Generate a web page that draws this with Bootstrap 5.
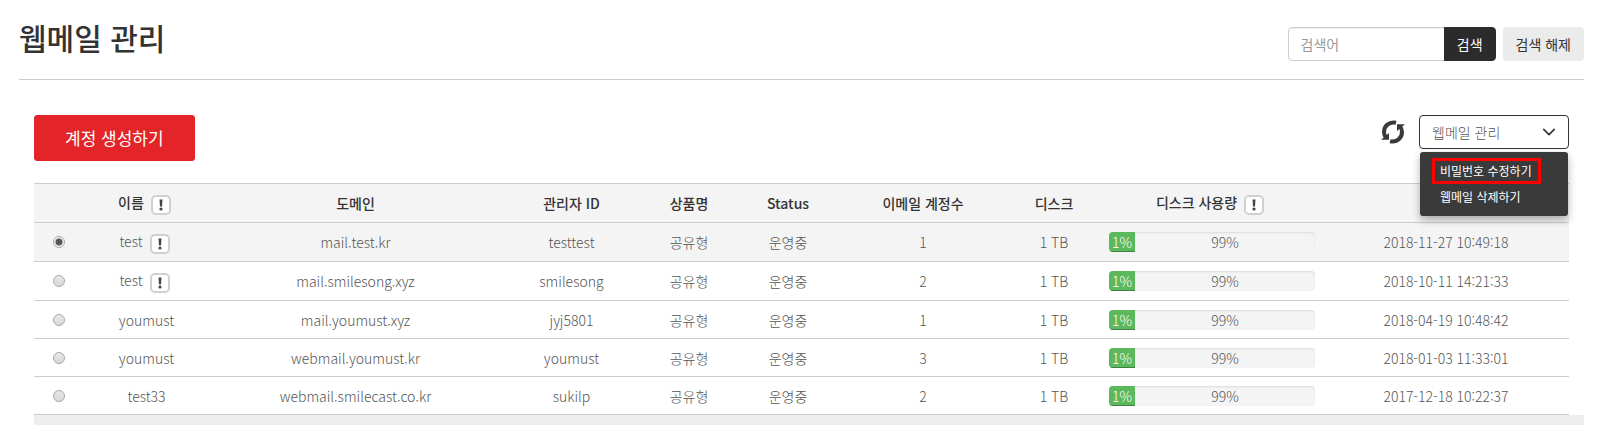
<!DOCTYPE html>
<html lang="ko">
<head>
<meta charset="utf-8">
<meta name="viewport" content="width=device-width, initial-scale=1">
<title>웹메일 관리</title>
<link href="https://cdn.jsdelivr.net/npm/bootstrap@5.3.0/dist/css/bootstrap.min.css" rel="stylesheet">
<style>
body { font-family: "Noto Sans CJK KR", sans-serif; font-size: 14px; line-height: 20px; font-weight: 300; color: #555; background: #fff; }
.page { padding: 0 21px 0 19px; }
.page-head { height: 80px; border-bottom: 1px solid #ccc; padding-bottom: 18px; }
.page-head h1 { font-size: 30px; line-height: 40px; padding-bottom: 4px; font-weight: 500; color: #333; }
.head-form { gap: 7px; }
.search-box { width: 208px; }
.form-control, .form-select, .head-btn { height: 34px; font-size: 14px; line-height: 20px; padding: 6px 12px; }
.form-control { font-weight: 400; border-color: #ccc; border-radius: 4px; box-shadow: inset 0 1px 1px rgba(0,0,0,.075); }
.form-control::placeholder { color: #999; }
.head-btn { font-weight: 400; border-radius: 4px; }
.btn-find, .btn-find:hover { background: #2b2b2b; color: #fff; border-color: #2b2b2b; }
.btn-clear, .btn-clear:hover { background: #ebebeb; color: #333; border-color: #ebebeb; }
.panel { padding: 35px 15px 0 15px; }
.toolbar { height: 68px; }
.btn-create, .btn-create:hover { background: #e32529; border-color: #e32529; color: #fff; font-size: 17px; line-height: 24px; padding: 10px 30px; border-radius: 3px; font-weight: 400; }
.tools { gap: 14px; }
.btn-refresh { width: 24px; height: 34px; line-height: 1; }
.manage { width: 150px; }
.form-select { font-weight: 300; color: #555; border-color: #333; border-radius: 4px; background-position: right 12px center; background-size: 14px 14px; }
.manage .dropdown-menu { top: 37px; left: 1px; right: 1px; min-width: 0; background: #3a3a3a; border: 0; border-radius: 3px; padding: 6px 12px; box-shadow: 0 4px 8px rgba(0,0,0,.3); }
.manage .dropdown-item { font-size: 12px; line-height: 18px; color: #fff; font-weight: 400; padding: 1px 5px; border: 3px solid transparent; width: 109px; }
.manage .dropdown-item:hover { background: transparent; }
.manage .marked { border-color: #f00; }
.accounts { table-layout: fixed; width: 100%; min-width: 1100px; text-align: center; border-collapse: collapse; }
.accounts th, .accounts td { border-top: 1px solid #ccc; border-bottom: 1px solid #ccc; padding: 8px; height: 38px; vertical-align: middle; white-space: nowrap; line-height: 20px; }
.accounts th { font-weight: 500; color: #333; }
.accounts thead tr, .accounts tr.chosen { background: #f4f4f4; }
.accounts tr.tall > * { height: 39px; }
.hint { width: 20px; height: 20px; border: 2px solid #d0d0d0; border-radius: 5px; background: #fff; padding: 0; margin: -1px 4px -1px 7px; display: inline-flex; align-items: center; justify-content: center; vertical-align: middle; }
.usage { height: 20px; border-radius: 4px; background: #f4f4f4; box-shadow: inset 0 1px 2px rgba(0,0,0,.1); font-size: 14px; }
.usage .progress-bar { background: #5cb85c; min-width: 26px; box-shadow: inset 0 -1px 0 rgba(0,0,0,.3); color: #fff; }
.usage .rest { flex: 1; text-align: center; color: #555; }
.accounts input { appearance: none; width: 12px; height: 12px; margin: 0 0 4px; border: 1px solid #aaa; border-radius: 50%; background: linear-gradient(#e8e8e8, #d8d8d8); vertical-align: middle; display: inline-block; }
.accounts input:checked { background: radial-gradient(circle, #555 0 3px, #eee 4px); }
.foot-strip { height: 10px; background: #eee; margin-right: -15px; }
</style>
<script src="https://cdn.jsdelivr.net/npm/bootstrap@5.3.0/dist/js/bootstrap.bundle.min.js"></script>
</head>
<body>
<svg class="d-none" aria-hidden="true">
  <symbol id="bang" viewBox="0 0 16 16"><path fill="#444" d="M6.500 2.500h3L9 9.500H7z"/><circle fill="#444" cx="8" cy="12" r="1.600"/></symbol>
</svg>
<main class="page">
  <header class="page-head d-flex justify-content-between align-items-end">
    <h1 class="mb-0">웹메일 관리</h1>
    <form class="d-flex head-form" onsubmit="return false">
      <div class="input-group flex-nowrap search-box">
        <input type="text" class="form-control" placeholder="검색어" aria-label="검색어">
        <button type="submit" class="btn head-btn btn-find">검색</button>
      </div>
      <button type="reset" class="btn head-btn btn-clear text-nowrap">검색 해제</button>
    </form>
  </header>
  <section class="panel">
    <div class="toolbar d-flex justify-content-between align-items-start">
      <button type="button" class="btn btn-create">계정 생성하기</button>
      <div class="d-flex tools">
        <button type="button" class="btn btn-refresh border-0 p-0" aria-label="새로고침">
          <svg width="24" height="24" viewBox="0 0 24 24" fill="none" stroke="#3a3a3a" stroke-width="4"><path d="M15 2.800C8 1.300 3 6 3 12c0 2 .6 4 2 5.500"/><path d="M9 21.200C16 22.700 21 18 21 12c0-2-.6-4-2-5.500"/><path d="M0 19.800L8 13v6.800zM24 4.200L16 11V4.200z" fill="#3a3a3a" stroke="none"/></svg>
        </button>
        <div class="manage position-relative">
          <select class="form-select" aria-label="작업"><option>웹메일 관리</option></select>
          <ul class="dropdown-menu show">
            <li><a class="dropdown-item marked" href="#">비밀번호 수정하기</a></li>
            <li><a class="dropdown-item" href="#">웹메일 삭제하기</a></li>
          </ul>
        </div>
      </div>
    </div>
    <table class="accounts">
      <colgroup><col style="width:50px"><col style="width:125px"><col style="width:293px"><col style="width:139px"><col style="width:96px"><col style="width:102px"><col style="width:168px"><col style="width:94px"><col style="width:222px"><col></colgroup>
      <thead>
        <tr class="tall"><th></th><th>이름<button type="button" class="hint" aria-label="도움말"><svg width="16" height="16"><use href="#bang"/></svg></button></th><th>도메인</th><th>관리자 ID</th><th>상품명</th><th>Status</th><th>이메일 계정수</th><th>디스크</th><th>디스크 사용량<button type="button" class="hint" aria-label="도움말"><svg width="16" height="16"><use href="#bang"/></svg></button></th><th></th></tr>
      </thead>
      <tbody>
        <tr class="tall chosen"><td><input type="radio" name="account" aria-label="mail.test.kr" checked></td><td>test<button type="button" class="hint" aria-label="도움말"><svg width="16" height="16"><use href="#bang"/></svg></button></td><td>mail.test.kr</td><td>testtest</td><td>공유형</td><td>운영중</td><td>1</td><td>1 TB</td><td><div class="progress usage"><div class="progress-bar" style="width:1%">1%</div><span class="rest">99%</span></div></td><td>2018-11-27 10:49:18</td></tr>
        <tr class="tall"><td><input type="radio" name="account" aria-label="mail.smilesong.xyz"></td><td>test<button type="button" class="hint" aria-label="도움말"><svg width="16" height="16"><use href="#bang"/></svg></button></td><td>mail.smilesong.xyz</td><td>smilesong</td><td>공유형</td><td>운영중</td><td>2</td><td>1 TB</td><td><div class="progress usage"><div class="progress-bar" style="width:1%">1%</div><span class="rest">99%</span></div></td><td>2018-10-11 14:21:33</td></tr>
        <tr><td><input type="radio" name="account" aria-label="mail.youmust.xyz"></td><td>youmust</td><td>mail.youmust.xyz</td><td>jyj5801</td><td>공유형</td><td>운영중</td><td>1</td><td>1 TB</td><td><div class="progress usage"><div class="progress-bar" style="width:1%">1%</div><span class="rest">99%</span></div></td><td>2018-04-19 10:48:42</td></tr>
        <tr><td><input type="radio" name="account" aria-label="webmail.youmust.kr"></td><td>youmust</td><td>webmail.youmust.kr</td><td>youmust</td><td>공유형</td><td>운영중</td><td>3</td><td>1 TB</td><td><div class="progress usage"><div class="progress-bar" style="width:1%">1%</div><span class="rest">99%</span></div></td><td>2018-01-03 11:33:01</td></tr>
        <tr><td><input type="radio" name="account" aria-label="webmail.smilecast.co.kr"></td><td>test33</td><td>webmail.smilecast.co.kr</td><td>sukilp</td><td>공유형</td><td>운영중</td><td>2</td><td>1 TB</td><td><div class="progress usage"><div class="progress-bar" style="width:1%">1%</div><span class="rest">99%</span></div></td><td>2017-12-18 10:22:37</td></tr>
      </tbody>
    </table>
    <div class="foot-strip"></div>
  </section>
</main>
</body>
</html>
